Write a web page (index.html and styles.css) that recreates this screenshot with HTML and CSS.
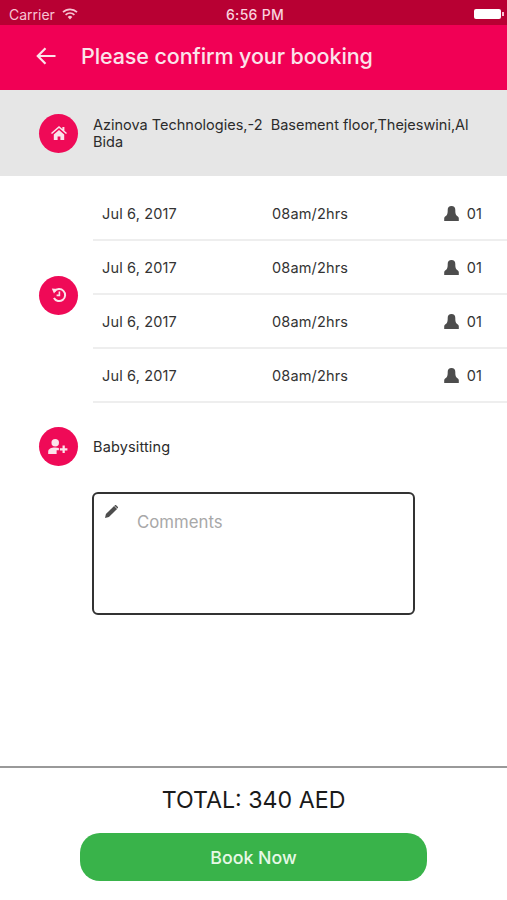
FILE: index.html
```html
<!DOCTYPE html>
<html lang="en">
<head>
  <meta charset="UTF-8">
  <title>Please confirm your booking</title>
  <link rel="stylesheet" href="styles.css">
</head>
<body>
  <svg class="icon-defs" width="0" height="0">
    <symbol id="person" viewBox="0 0 15 15">
      <path d="M7.500 0C5 0 3.700 1.600 3.700 3.900c0 1.900-.1 3.600-.9 5.200-.5 1-1.200 1.200-1.900 1.700-.5.400-.7.900-.7 1.500V15h14.600v-2.700c0-.6-.2-1.100-.7-1.500-.7-.5-1.400-.7-1.900-1.700-.8-1.600-.9-3.300-.9-5.200C11.300 1.600 10 0 7.500 0z" fill="#4d4d4d"/>
    </symbol>
  </svg>

  <div class="page">
    <div class="status-bar">
      <div class="status-left">
        <span>Carrier</span>
        <svg class="wifi" viewBox="0 0 16 12" width="16" height="12">
          <path d="M1 4.200a10 10 0 0 1 14 0" fill="none" stroke="#f7c4d3" stroke-width="1.700"/>
          <path d="M3.600 6.800a6.300 6.300 0 0 1 8.800 0" fill="none" stroke="#f7c4d3" stroke-width="1.700"/>
          <path d="M8 11.500 5.700 9a3.200 3.200 0 0 1 4.600 0z" fill="#f7c4d3"/>
        </svg>
      </div>
      <div class="status-time">6:56 PM</div>
      <div class="status-right">
        <span class="battery"></span><span class="battery-tip"></span>
      </div>
    </div>

    <header class="top-bar">
      <svg class="back" viewBox="0 0 20 18" width="20" height="18">
        <path d="M19.500 9H2M9.500 1.200 1.800 9l7.700 7.800" fill="none" stroke="#fbe3ea" stroke-width="2.200"/>
      </svg>
      <h1>Please confirm your booking</h1>
    </header>

    <section class="address">
      <div class="circle">
        <svg viewBox="0 0 16 14" width="16" height="14">
          <path d="M8 0 0 7l1 1.100L8 2l7 6.100L16 7l-2.600-2.300V1h-2v2zM2.800 8.600V14h3.800v-3.600h2.800V14h3.800V8.600L8 4z" fill="#fbe3ea"/>
        </svg>
      </div>
      <p>Azinova Technologies,-2&nbsp; Basement floor,Thejeswini,Al Bida</p>
    </section>

    <main class="content">
      <section class="slots">
        <div class="circle">
          <svg viewBox="0 0 16 16" width="16" height="16">
            <path d="M3.400 4.400A6 6 0 1 1 2.900 11" fill="none" stroke="#fbe3ea" stroke-width="2"/>
            <path d="M.8 1.600 6.400 2 3 6.600z" fill="#fbe3ea"/>
            <path d="M8.400 4.600v3.800H5.600" fill="none" stroke="#fbe3ea" stroke-width="1.600"/>
          </svg>
        </div>
        <div class="slot-list">
          <div class="slot">
            <span class="slot-date">Jul 6, 2017</span>
            <span class="slot-time">08am/2hrs</span>
            <span class="slot-count"><svg width="15" height="15"><use href="#person"/></svg>01</span>
          </div>
          <div class="slot">
            <span class="slot-date">Jul 6, 2017</span>
            <span class="slot-time">08am/2hrs</span>
            <span class="slot-count"><svg width="15" height="15"><use href="#person"/></svg>01</span>
          </div>
          <div class="slot">
            <span class="slot-date">Jul 6, 2017</span>
            <span class="slot-time">08am/2hrs</span>
            <span class="slot-count"><svg width="15" height="15"><use href="#person"/></svg>01</span>
          </div>
          <div class="slot">
            <span class="slot-date">Jul 6, 2017</span>
            <span class="slot-time">08am/2hrs</span>
            <span class="slot-count"><svg width="15" height="15"><use href="#person"/></svg>01</span>
          </div>
        </div>
      </section>

      <section class="service">
        <div class="circle">
          <svg viewBox="0 0 22 16" width="21" height="15">
            <circle cx="7.500" cy="4" r="4" fill="#fbe3ea"/>
            <path d="M0 16v-2.500C0 10.500 3 9 7.500 9c1.500 0 2.800.2 3.900.5V12H9v4z" fill="#fbe3ea"/>
            <path d="M16.500 7v8M12.500 11h8" fill="none" stroke="#fbe3ea" stroke-width="2.400"/>
          </svg>
        </div>
        <span>Babysitting</span>
      </section>

      <div class="comment-box">
        <svg class="pencil" viewBox="0 0 14 14" width="13" height="13">
          <path d="M0 14l1-4.200L9.800 1 13 4.200 4.200 13z" fill="#4d4d4d"/>
          <path d="M10.600.3a1 1 0 0 1 1.400 0l1.700 1.700a1 1 0 0 1 0 1.400l-.3.3L10.200.7z" fill="#4d4d4d"/>
        </svg>
        <span class="comment-placeholder">Comments</span>
      </div>
    </main>

    <footer class="footer">
      <div class="total">TOTAL: 340 AED</div>
      <button class="book-btn">Book Now</button>
    </footer>
  </div>
</body>
</html>
```

FILE: styles.css
```css
* {
  box-sizing: border-box;
}
html, body {
  margin: 0;
  padding: 0;
}
body {
  font-family: Inter, "Liberation Sans", sans-serif;
  background: #fff;
  color: #333;
}
.icon-defs {
  display: block;
  height: 0;
}
.page {
  width: 507px;
  height: 900px;
  display: flex;
  flex-direction: column;
  overflow: hidden;
}

/* status bar */
.status-bar {
  height: 25px;
  background: #b80033;
  color: #f7c4d3;
  font-size: 14px;
  display: flex;
  align-items: center;
  justify-content: space-between;
  padding: 3px 3px 0 9px;
  position: relative;
}
.status-left {
  display: flex;
  align-items: center;
  gap: 7px;
}
.status-time {
  position: absolute;
  left: 226px;
  top: 6px;
  color: #f9d3de;
  font-weight: 500;
  letter-spacing: 0.3px;
}
.status-right {
  display: flex;
  align-items: center;
}
.battery {
  width: 27px;
  height: 10px;
  background: #fff;
  border-radius: 2px;
}
.battery-tip {
  width: 2px;
  height: 4px;
  margin-left: 1px;
  background: #f7c4d3;
}

/* header */
.top-bar {
  height: 65px;
  background: #f10055;
  display: flex;
  align-items: center;
  padding: 0 0 3px 36px;
  gap: 25px;
}
.top-bar h1 {
  margin: 0;
  font-size: 21.5px;
  font-weight: 500;
  color: #fbe3ea;
  letter-spacing: -0.1px;
}
.back {
  flex: none;
}

.circle {
  width: 39px;
  height: 39px;
  flex: none;
  border-radius: 50%;
  background: #ef0a57;
  display: flex;
  align-items: center;
  justify-content: center;
}

/* address */
.address {
  height: 86px;
  background: #e6e6e6;
  display: flex;
  align-items: center;
  gap: 15px;
  padding: 0 30px 0 39px;
}
.address p {
  margin: 0;
  font-size: 14.5px;
  line-height: 17px;
  color: #2b2b2b;
}

.content {
  flex: 1;
  padding-top: 11px;
}

/* booked slots */
.slots {
  display: flex;
  align-items: center;
  gap: 15px;
  padding-left: 39px;
}
.slot-list {
  flex: 1;
}
.slot {
  height: 54px;
  display: flex;
  align-items: center;
  padding: 0 25px 0 9px;
  border-bottom: 2px solid #eee;
  font-size: 14.5px;
  letter-spacing: 0.15px;
  color: #333;
}
.slot-date {
  width: 170px;
}
.slot-time {
  flex: 1;
}
.slot-count {
  display: flex;
  align-items: center;
  gap: 8px;
}

.service {
  display: flex;
  align-items: center;
  gap: 15px;
  padding: 24px 0 0 39px;
  font-size: 14.5px;
  letter-spacing: 0.15px;
  color: #2b2b2b;
}

/* comments */
.comment-box {
  position: relative;
  width: 323px;
  height: 123px;
  margin: 26px 0 0 92px;
  border: 2px solid #333;
  border-radius: 6px;
  padding: 18px 0 0 43px;
}
.pencil {
  position: absolute;
  left: 11px;
  top: 11px;
}
.comment-placeholder {
  font-size: 16.8px;
  color: #a8a8a8;
}

/* footer */
.footer {
  height: 134px;
  border-top: 2px solid #999;
  display: flex;
  flex-direction: column;
  align-items: center;
  padding-top: 18px;
}
.total {
  font-size: 23.2px;
  line-height: 29px;
  color: #1a1a1a;
}
.book-btn {
  width: 347px;
  height: 48px;
  margin-top: 18px;
  border: none;
  border-radius: 20px;
  background: #39b34a;
  color: #e6f8e6;
  font-family: inherit;
  font-size: 17.8px;
  font-weight: 500;
}
```
